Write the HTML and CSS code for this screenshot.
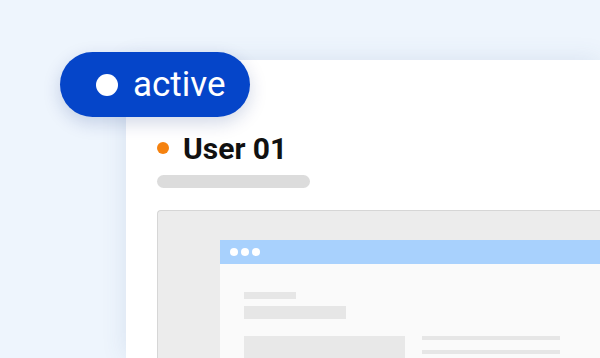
FILE: index.html
```html
<!DOCTYPE html>
<html lang="en">

<head>
    <meta charset="utf-8" />
    <title>User status</title>
    <link rel="stylesheet" href="styles.css">
</head>

<body>
    <div class="stage">
        <div class="badge"><span class="badge-dot"></span>active</div>
        <div class="card">
            <div class="user">
                <span class="user-dot"></span>
                <h2>User 01</h2>
            </div>
            <div class="subline"></div>
            <div class="preview">
                <div class="window">
                    <div class="window-bar">
                        <span></span><span></span><span></span>
                    </div>
                    <div class="window-body">
                        <div class="ph-short"></div>
                        <div class="ph-title"></div>
                        <div class="ph-row">
                            <div class="ph-block"></div>
                            <div class="ph-lines">
                                <div class="ph-line"></div>
                                <div class="ph-line"></div>
                            </div>
                        </div>
                    </div>
                </div>
            </div>
        </div>
    </div>
</body>

</html>
```

FILE: styles.css
```css
body {
    margin: 0;
    width: 600px;
    height: 358px;
    overflow: hidden;
    background-color: #eef5fd;
    font-family: Roboto, "Liberation Sans", sans-serif;
}

.stage {
    position: relative;
    height: 100%;
    padding: 60px 0 0 126px;
    box-sizing: border-box;
    overflow: hidden;
}

.badge {
    position: absolute;
    left: 60px;
    top: 52px;
    width: 190px;
    height: 65px;
    box-sizing: border-box;
    padding-left: 36px;
    display: flex;
    align-items: center;
    gap: 15px;
    border-radius: 33px;
    background-color: #0545c9;
    color: white;
    font-size: 35px;
    box-shadow: 0 6px 18px rgba(0, 40, 120, 0.18);
    z-index: 2;
}

.badge-dot {
    width: 22px;
    height: 22px;
    border-radius: 50%;
    background-color: white;
}

.card {
    height: 298px;
    overflow: hidden;
    background-color: white;
    padding: 73px 0 0 31px;
    box-sizing: border-box;
    box-shadow: 0 0 24px rgba(60, 90, 140, 0.12);
}

.user {
    display: flex;
    align-items: center;
    gap: 14px;
    height: 30px;
}

.user-dot {
    width: 12px;
    height: 12px;
    border-radius: 50%;
    background-color: #f5820f;
}

.user h2 {
    margin: 0;
    font-size: 30px;
    font-weight: 700;
    color: #111;
}

.subline {
    width: 153px;
    height: 13px;
    margin-top: 12px;
    border-radius: 7px;
    background-color: #dcdcdc;
}

.preview {
    margin-top: 22px;
    height: 160px;
    padding: 29px 0 0 62px;
    border: 1px solid #d6d6d6;
    border-right: none;
    border-radius: 4px 0 0 0;
    background-color: #ececec;
}

.window {
    height: 100%;
    background-color: #fafafa;
}

.window-bar {
    height: 24px;
    display: flex;
    align-items: center;
    gap: 3px;
    padding-left: 10px;
    background-color: #a8d1fd;
}

.window-bar span {
    width: 8px;
    height: 8px;
    border-radius: 50%;
    background-color: white;
}

.window-body {
    padding: 28px 0 0 24px;
}

.ph-short {
    width: 52px;
    height: 7px;
    background-color: #e6e6e6;
}

.ph-title {
    width: 102px;
    height: 13px;
    margin-top: 7px;
    background-color: #e6e6e6;
}

.ph-row {
    display: flex;
    gap: 17px;
    margin-top: 17px;
}

.ph-block {
    width: 161px;
    height: 40px;
    background-color: #e8e8e8;
}

.ph-lines {
    display: flex;
    flex-direction: column;
    gap: 10px;
}

.ph-line {
    width: 138px;
    height: 4px;
    background-color: #e6e6e6;
}
```
